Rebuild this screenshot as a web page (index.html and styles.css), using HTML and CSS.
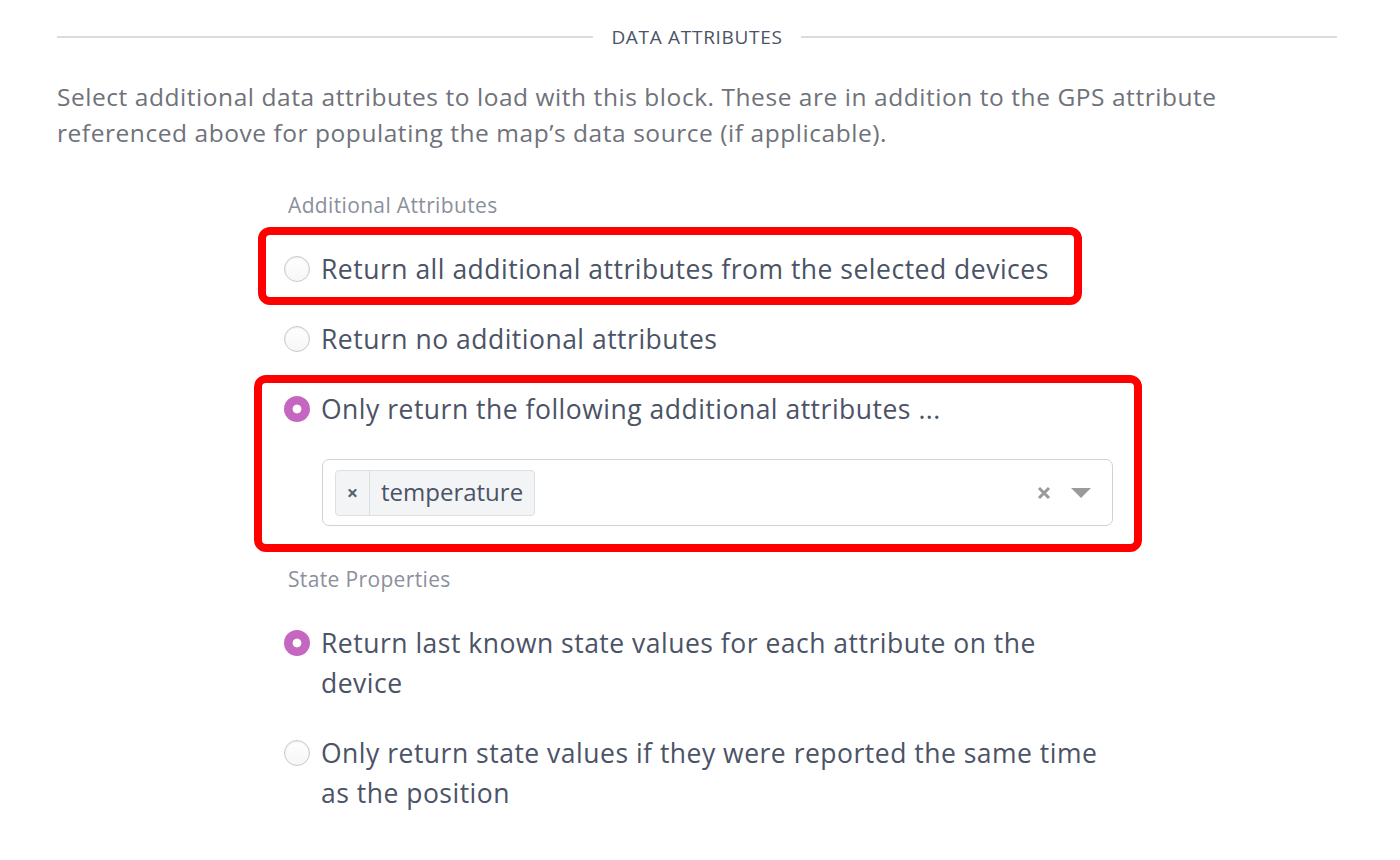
FILE: index.html
```html
<!DOCTYPE html>
<html>
<head>
<meta charset="utf-8">
<link rel="stylesheet" href="styles.css">
</head>
<body>
<div class="page">
  <div class="divider">
    <span class="rule"></span>
    <span class="divider-title">DATA ATTRIBUTES</span>
    <span class="rule"></span>
  </div>
  <p class="intro">Select additional data attributes to load with this block. These are in addition to the GPS attribute referenced above for populating the map’s data source (if applicable).</p>

  <div class="form">
    <div class="field-label">Additional Attributes</div>
    <label class="option">
      <span class="radio"></span>
      <span class="option-text">Return all additional attributes from the selected devices</span>
    </label>
    <label class="option">
      <span class="radio"></span>
      <span class="option-text">Return no additional attributes</span>
    </label>
    <label class="option">
      <span class="radio checked"></span>
      <span class="option-text">Only return the following additional attributes ...</span>
    </label>
    <div class="select">
      <div class="tag">
        <span class="tag-remove">×</span>
        <span class="tag-text">temperature</span>
      </div>
      <div class="select-controls">
        <svg class="clear-icon" width="14" height="14" viewBox="0 0 14 14"><path d="M2 2 L12 12 M12 2 L2 12" stroke="#9a9a9a" stroke-width="3" stroke-linecap="butt"/></svg>
        <svg class="arrow-icon" width="20" height="10" viewBox="0 0 20 10"><path d="M0 0 H20 L10 10 Z" fill="#9a9a9a"/></svg>
      </div>
    </div>

    <div class="field-label state-label">State Properties</div>
    <label class="option">
      <span class="radio checked"></span>
      <span class="option-text">Return last known state values for each attribute on the device</span>
    </label>
    <label class="option">
      <span class="radio"></span>
      <span class="option-text">Only return state values if they were reported the same time as the position</span>
    </label>

    <div class="annot annot-1"></div>
    <div class="annot annot-2"></div>
  </div>
</div>
</body>
</html>
```

FILE: styles.css
```css
html, body {
  margin: 0;
  padding: 0;
  background: #ffffff;
}
body {
  font-family: "Open Sans", "Noto Sans", sans-serif;
  color: #4b5366;
}
.page {
  width: 1280px;
  margin-left: 57px;
  padding-top: 22px;
}
.divider {
  display: flex;
  align-items: center;
  gap: 18px;
  height: 30px;
}
.rule {
  flex: 1;
  height: 2px;
  background: #dcdcdc;
}
.divider-title {
  font-size: 19px;
  color: #4b5366;
  letter-spacing: 0.7px;
}
.intro {
  margin: 27px 0 0 0;
  width: 1230px;
  font-size: 24.5px;
  letter-spacing: 0.55px;
  line-height: 36px;
  color: #6f727a;
}
.form {
  position: relative;
  margin-left: 227px;
  width: 829px;
  margin-top: 39px;
}
.field-label {
  font-size: 21px;
  letter-spacing: 0.35px;
  line-height: 30px;
  color: #8b909c;
  padding-left: 4px;
  margin-bottom: 29px;
}
.state-label {
  margin-top: 38px;
}
.option {
  display: flex;
  align-items: flex-start;
  gap: 11px;
  margin-bottom: 30px;
}
.radio {
  flex: none;
  box-sizing: border-box;
  width: 26px;
  height: 26px;
  margin-top: 7px;
  border-radius: 50%;
  border: 1.5px solid #c9c9c9;
  background: linear-gradient(#ffffff, #f6f6f6);
  box-shadow: inset 0 1px 2px rgba(0,0,0,0.08);
}
.radio.checked {
  border: none;
  background: radial-gradient(circle, #ffffff 0 4px, #c566c0 4.8px);
  box-shadow: none;
}
.option-text {
  font-size: 26.5px;
  letter-spacing: 0.5px;
  line-height: 40px;
}
.select {
  box-sizing: border-box;
  margin-left: 38px;
  margin-top: 1px;
  width: 791px;
  height: 67px;
  border: 1.5px solid #d2d2d2;
  border-radius: 7px;
  display: flex;
  align-items: center;
  padding: 0 21px 0 12px;
}
.tag {
  display: flex;
  align-items: stretch;
  height: 46px;
  box-sizing: border-box;
  border: 1.5px solid #dcdfe3;
  border-radius: 4px;
  background: #f3f4f6;
}
.tag-remove {
  width: 33px;
  display: flex;
  align-items: center;
  justify-content: center;
  font-size: 20px;
  font-weight: bold;
  color: #5a6070;
  border-right: 1.5px solid #dcdfe3;
}
.tag-text {
  display: flex;
  align-items: center;
  padding: 0 11px 2px;
  font-size: 24px;
  color: #4b5366;
}
.select-controls {
  margin-left: auto;
  display: flex;
  align-items: center;
  gap: 20px;
}
.annot {
  position: absolute;
  box-sizing: border-box;
  border: 8px solid #ff0000;
  border-radius: 12px;
  pointer-events: none;
}
.annot-1 {
  left: -26px;
  top: 37px;
  width: 824px;
  height: 78px;
}
.annot-2 {
  left: -30px;
  top: 185px;
  width: 888px;
  height: 177px;
}
```
